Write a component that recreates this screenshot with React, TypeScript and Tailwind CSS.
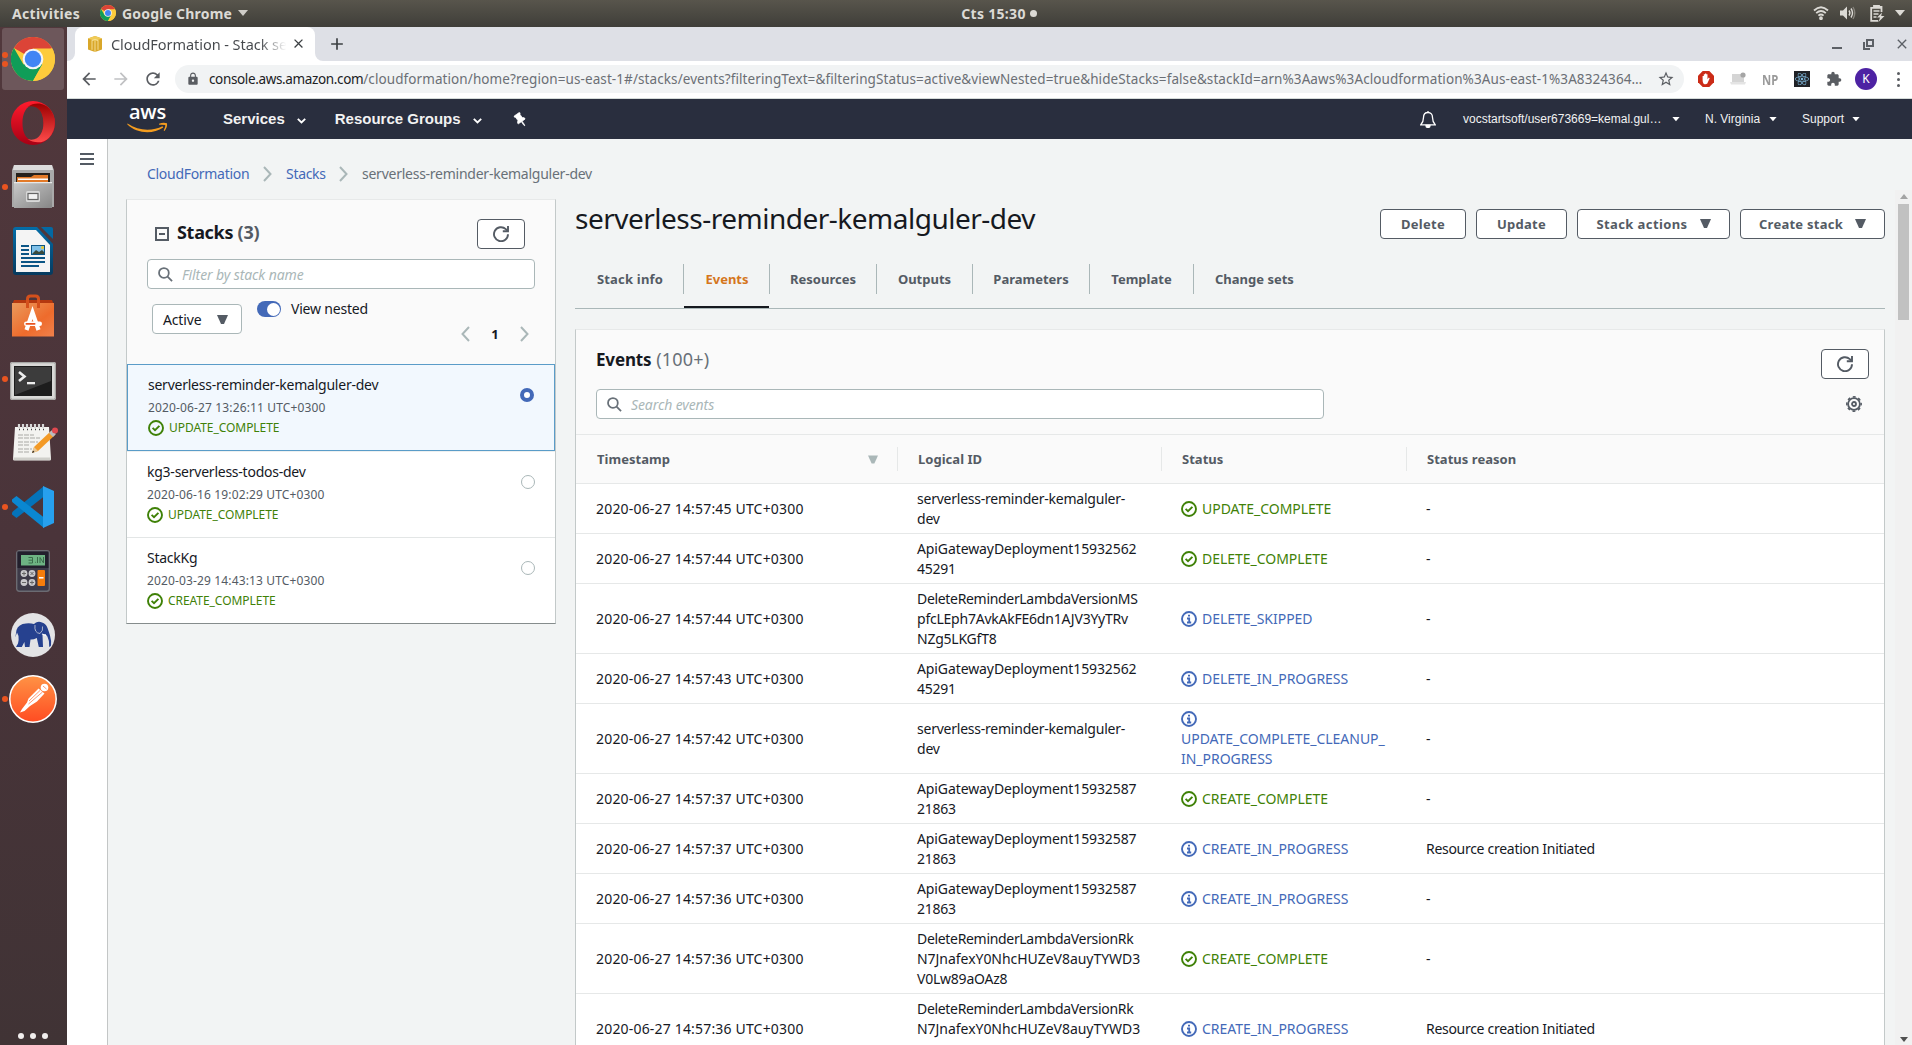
import React from "react";
import { BsPinAngleFill } from "react-icons/bs";
import { MdExtension, MdLock, MdStarBorder, MdRefresh, MdArrowBack, MdArrowForward, MdClose, MdAdd } from "react-icons/md";
import { FaReact } from "react-icons/fa";

/* ---------- shared glyphs ---------- */

const StatusIcon = ({ ok }: { ok: boolean }) =>
  ok ? (
    <svg viewBox="0 0 16 16" className="inline-block h-4 w-4 shrink-0 fill-none stroke-[#3f8107]">
      <circle cx="8" cy="8" r="7" strokeWidth="1.9" />
      <path d="M4.6 7.9 7 10.2 11.4 5.8" strokeWidth="1.9" />
    </svg>
  ) : (
    <svg viewBox="0 0 16 16" className="inline-block h-4 w-4 shrink-0 fill-none stroke-[#4369b8]">
      <circle cx="8" cy="8" r="7" strokeWidth="1.9" />
      <path d="M6 7.5h2.2v3.8M6 11.5h4.2M7 4.6h2" strokeWidth="1.8" />
    </svg>
  );

const RefreshIcon = () => (
  <svg viewBox="0 0 16 16" className="h-4 w-4 fill-none stroke-[#545b64]" strokeWidth="1.9">
    <path d="M15 8.2A7 7 0 1 1 12.8 3.1L15 5.1" />
    <path d="M15 0v5.3H9.8" />
  </svg>
);

const SearchIcon = () => (
  <svg viewBox="0 0 16 16" className="h-[15px] w-[15px] shrink-0 fill-none stroke-[#687078]" strokeWidth="1.9">
    <circle cx="6.3" cy="6.3" r="5.2" />
    <path d="m10.2 10.2 4.8 4.8" />
  </svg>
);

const Triangle = ({ className }: { className: string }) => (
  <svg viewBox="0 0 11 9" className={className}>
    <path d="M0 0h11L7 9H4z" />
  </svg>
);

const Chevron = ({ left = false, className = "" }: { left?: boolean; className?: string }) => (
  <svg viewBox="0 0 9 16" className={"h-4 w-[9px] fill-none stroke-[#aab7b8] " + className} strokeWidth="2">
    <path d={left ? "M8 1 1.5 8 8 15" : "M1 1l6.500 7L1 15"} />
  </svg>
);

const NavCaret = ({ className = "" }: { className?: string }) => (
  <svg viewBox="0 0 8 6" className={"h-[6px] w-2 fill-white " + className}>
    <path d="M.4 1h7.200L4 5.200z" />
  </svg>
);

/* ---------- desktop panel ---------- */

function TopBar() {
  return (
    <div className="relative flex h-[27px] shrink-0 items-center bg-gradient-to-b from-[#58554c] to-[#3f3e39] pb-[1px] font-['Noto_Sans'] text-[14px] font-bold text-[#dcdad5]">
      <span className="ml-3 w-[88px] tracking-[.3px]">Activities</span>
      <ChromeLogo className="h-4 w-4" />
      <span className="ml-[6px] whitespace-nowrap tracking-[.2px]">Google Chrome</span>
      <svg viewBox="0 0 10 6" className="ml-[6px] h-[6px] w-[10px] fill-[#cfcdc8]"><path d="M0 0h10L5 6z" /></svg>
      <div className="absolute inset-x-0 flex items-center justify-center gap-1 pl-[86px] tracking-[.3px]">
        <span>Cts 15:30</span>
        <span className="h-[7px] w-[7px] rounded-full bg-[#dcdad5]" />
      </div>
      <div className="ml-auto flex items-center pr-[7px]">
        <svg viewBox="0 0 16 14" className="h-[14px] w-4 fill-none stroke-[#dcdad5]" strokeWidth="1.8">
          <path d="M1 4.500Q8-2 15 4.500M3.200 7.200Q8 2.800 12.800 7.200M5.400 9.600Q8 7.300 10.600 9.600" />
          <circle cx="8" cy="12.200" r="1" />
        </svg>
        <svg viewBox="0 0 16 14" className="ml-[11px] h-[14px] w-4">
          <path d="M0 4.500h3l4-4v13l-4-4H0z" fill="#dcdad5" />
          <path d="M9 4.500q1.800 2.500 0 5M11 2.500q3 4.500 0 9" fill="none" stroke="#dcdad5" strokeWidth="1.400" />
          <path d="M13 1q3.500 6 0 12" fill="none" stroke="#85827a" strokeWidth="1.400" />
        </svg>
        <svg viewBox="0 0 15 17" className="ml-[14px] h-[17px] w-[15px]">
          <path d="M4 2V1h5v1h2.500v5M1.200 2.800h10.300M1.200 2v13.800h7" fill="none" stroke="#dcdad5" strokeWidth="1.800" />
          <path d="M3.500 6h6M3.500 9h5M3.500 12h3" stroke="#dcdad5" strokeWidth="1.600" />
          <path d="M12 7.500 7 12.500h3L8.500 17l6-6h-3.300z" fill="#dcdad5" />
        </svg>
        <svg viewBox="0 0 10 6" className="ml-[10px] h-[6px] w-[10px] fill-[#dcdad5]"><path d="M0 0h10L5 6z" /></svg>
      </div>
    </div>
  );
}

const ChromeLogo = ({ className }: { className: string }) => (
  <svg viewBox="0 0 48 48" className={className}>
    <circle cx="24" cy="24" r="24" fill="#fdcb3c" />
    <path d="M24 24 3.200 12A24 24 0 0 1 44.800 12z" fill="#dc4437" />
    <path d="M3.200 12A24 24 0 0 0 24 48L34.400 30 24 24 13.600 30z" fill="#109d58" />
    <path d="M24 12.500h21A24 24 0 0 1 24 48l10-18z" fill="#fdcb3c" />
    <circle cx="24" cy="24" r="11.300" fill="#f5f5f5" />
    <circle cx="24" cy="24" r="9" fill="#4285f4" />
  </svg>
);

/* ---------- dock icons ---------- */

const Opera = () => (
  <svg viewBox="0 0 48 48" className="h-11 w-11">
    <defs>
      <linearGradient id="op1" x1="0" y1="0" x2="0" y2="1"><stop stopColor="#ff1b2d" /><stop offset="1" stopColor="#a70014" /></linearGradient>
      <linearGradient id="op2" x1="0" y1="0" x2="0" y2="1"><stop stopColor="#9c0000" /><stop offset="1" stopColor="#ff4b4b" /></linearGradient>
    </defs>
    <path d="M24 0a24 24 0 1 0 0 48 24 24 0 0 0 0-48m0 5c7 0 11.500 8 11.500 19S31 43 24 43 12.500 35 12.500 24 17 5 24 5" fill="url(#op1)" fillRule="evenodd" />
    <path d="M18 6.500C27-.5 38 3 42.500 9a24 24 0 0 1-1 31C36 46 26 47 18 41.500 30 45 35.500 34 35.500 24S30 3 18 6.500" fill="url(#op2)" />
  </svg>
);

const Files = () => (
  <svg viewBox="0 0 42 44" className="h-11 w-[42px]">
    <defs><linearGradient id="fl" x1="0" y1="0" x2="1" y2="1"><stop stopColor="#c9c9c9" /><stop offset="1" stopColor="#868686" /></linearGradient></defs>
    <path d="M2 0h38l2 5v37H0V5z" fill="#a9a9a9" />
    <path d="M2 0h38l1 5H1z" fill="#dcdcdc" />
    <path d="M4 8h34v10H4z" fill="#26211c" />
    <path d="M5 12h14l3-2h14v8H5z" fill="#e37a28" />
    <path d="M6 13.500h30v1.500H6z" fill="#fff" />
    <path d="M2 17h38v26H2z" fill="url(#fl)" />
    <path d="M2 17h38v1.200H2z" fill="#e8e8e8" />
    <rect x="14" y="26" width="14" height="11" rx="1.500" fill="#d8d8d8" />
    <rect x="16" y="28.500" width="10" height="6" fill="#f2f2f2" stroke="#666" strokeWidth="1.200" />
  </svg>
);

const Writer = () => (
  <svg viewBox="0 0 40 48" className="h-12 w-10">
    <defs><linearGradient id="wr" x1="0" y1="0" x2="0" y2="1"><stop stopColor="#036da8" /><stop offset="1" stopColor="#063a5e" /></linearGradient></defs>
    <path d="M3 0h21l16 17v28q0 3-3 3H3q-3 0-3-3V3q0-3 3-3" fill="url(#wr)" />
    <path d="M3 3h20l14 15v27H3z" fill="#f4f4f4" />
    <path d="M28 0h10q2 0 2 2v10z" fill="#0369a3" />
    <path d="M8 18h8v2H8zm0 4h8v2H8zm0 4h8v2H8zm0 4h24v2H8zm0 4h24v2H8zm0 4h18v2H8z" fill="#0b5585" />
    <path d="M18 18h14v10H18z" fill="#0b5585" />
    <path d="M19 19h12v8H19z" fill="#7fc0e8" />
    <path d="m19 27 4-4 3 2 3-2 2 2v2z" fill="#3a4a3c" />
    <circle cx="29.500" cy="20.500" r="1.500" fill="#f0c829" />
  </svg>
);

const Software = () => (
  <svg viewBox="0 0 42 43" className="h-[43px] w-[42px]">
    <defs><linearGradient id="sw" x1="0" y1="0" x2="1" y2="1"><stop stopColor="#ea9a5c" /><stop offset=".6" stopColor="#ee6b2c" /><stop offset="1" stopColor="#f0814c" /></linearGradient></defs>
    <path d="M2 6h38l2 5H0z" fill="#b5380f" />
    <path d="M0 9h42v33.500H0z" fill="url(#sw)" />
    <path d="M15.500 14V5q0-3 3-3h5q3 0 3 3v9" fill="none" stroke="#d4501c" strokeWidth="3" />
    <path d="m14.500 36 6-17.500 6 17.500" fill="none" stroke="#fff" strokeWidth="4.200" />
    <rect x="12" y="27.500" width="18" height="4.500" rx="2.200" fill="#fff" />
    <rect x="13.500" y="29" width="10" height="1.700" rx=".8" fill="#e95420" />
  </svg>
);

const TerminalIcon = () => (
  <svg viewBox="0 0 46 38" className="h-[38px] w-[46px]">
    <rect width="46" height="38" rx="2" fill="#d9d9d7" />
    <rect x=".7" y=".7" width="44.600" height="36.600" rx="1.500" fill="none" stroke="#9a9a98" />
    <rect x="4" y="4" width="38" height="30" fill="#1d1d1d" />
    <path d="M5 5h36v14L5 33z" fill="#3c3c3c" />
    <path d="m9 10 5.500 4.500L9 19" fill="none" stroke="#eee" strokeWidth="2.600" />
    <path d="M17 20h8v2.300h-8z" fill="#eee" />
  </svg>
);

const Gedit = () => (
  <svg viewBox="0 0 46 38" className="h-[38px] w-[46px]">
    <path d="M3 4h34l2 32q0 1.500-1.500 1.500h-35Q1 37.500 1 36z" fill="#f3f3f0" />
    <path d="M1.500 34.500h37V37h-37z" fill="#cfcfca" />
    <path d="M7 1v4m4-4v4m4-4v4m4-4v4m4-4v4m4-4v4m4-4v4" stroke="#d8d8d8" strokeWidth="2.200" />
    <path d="M7 6.500h1m3 0h1m3 0h1m3 0h1m3 0h1m3 0h1m3 0h1" stroke="#444" strokeWidth="1.500" />
    <path d="M6 12h16M6 15h22M6 19h20M6 22h12M6 26h14M6 29h12" stroke="#a9a9a5" strokeWidth="1" strokeDasharray="5 1" />
    <path d="m20 30 2-6L39 8l4 4-17 16z" fill="#f39a26" />
    <path d="m20 30 2-6 4 4z" fill="#e8c89a" />
    <path d="m20 30 1-2.500 1.500 1.500z" fill="#222" />
    <path d="m37 10 3-3 4 4-3 3z" fill="#b9bcc0" />
    <circle cx="43" cy="7.500" r="3" fill="#e0484f" />
  </svg>
);

const VsCode = () => (
  <svg viewBox="0 0 42 42" className="h-[42px] w-[42px]">
    <path d="M0 28.500 4.500 32 32 10.500V0L.8 25.500Q-.5 27 0 28.500" fill="#0473b9" />
    <path d="M0 13.500 4.500 10 32 31.500V42L.8 16.500Q-.5 15 0 13.500" fill="#0a87d1" />
    <path d="M31 0 42 5v32l-11 5z" fill="#27a0ee" />
  </svg>
);

const Calculator = () => (
  <svg viewBox="0 0 34 42" className="h-[42px] w-[34px]">
    <rect x=".7" y=".7" width="32.600" height="40.600" rx="2.500" fill="#3d3a48" stroke="#6b6b72" strokeWidth="1.400" />
    <path d="M1.500 1.500h31V18h-31z" fill="#221f2c" />
    <path d="M5 5h24v10.500H5z" fill="#6db383" />
    <path d="M12.500 7.500h4v5.500h-4m0-2.800h4M19 12.300h.8M21.500 7v6M24 13V7.500l3.500 5.500V7" fill="none" stroke="#3b6b4b" strokeWidth="1" />
    <circle cx="8" cy="23.500" r="3.400" fill="#c9c9cc" /><circle cx="16" cy="23.500" r="3.400" fill="#c9c9cc" />
    <circle cx="8" cy="32.500" r="3.400" fill="#c9c9cc" /><circle cx="16" cy="32.500" r="3.400" fill="#c9c9cc" />
    <path d="M6 23.500h4M8 21.500v4M14.500 22l3 3M17.500 22l-3 3M6 32.500h4M14 32.500h4M16 30.500v4" stroke="#666" strokeWidth="1" />
    <rect x="21.500" y="20" width="7.500" height="16" rx="1" fill="#f57d0b" />
    <path d="M23 27.800h4.500" stroke="#fff" strokeWidth="1.500" />
  </svg>
);

const Elephant = () => (
  <svg viewBox="0 0 44 44" className="h-11 w-11">
    <circle cx="22" cy="22" r="22" fill="#e3e3e5" />
    <path d="M5.500 17Q7.500 11 15 10.500q4-.5 8 .5l2-1.500q3-1.500 6 0 4 1 5.500 5.500 1.500 4 2.500 7.500 1.500 5 1 10l-1.200 1.500-.6-.6q.3-6-1.800-10l-2-2.500q-2 1-2.900 1l.5 12h-4.200l-2-9q-3.500 1.800-6.300 1.500l-1 7.500H14l-.6-5-2.600 5H5l2-3.500q1-4 .5-7.500L6 19.500l-1.700 5z" fill="#26418f" />
    <path d="M24 12q-1 8 5 8.500 3.500-3 2.500-7" fill="none" stroke="#e3e3e5" strokeWidth=".7" />
    <path d="m31 21 4 1.500" stroke="#fff" strokeWidth="1.200" />
  </svg>
);

const Postman = () => (
  <svg viewBox="0 0 48 48" className="h-12 w-12">
    <defs><linearGradient id="pm" x1="0" y1="0" x2="0" y2="1"><stop stopColor="#ff9345" /><stop offset="1" stopColor="#ff4c22" /></linearGradient></defs>
    <circle cx="24" cy="24" r="23.200" fill="url(#pm)" stroke="#fff" strokeWidth="1.500" />
    <circle cx="35.500" cy="12.500" r="3.800" fill="#fff" />
    <path d="m29.500 13.500 6 5-7.500 8-7 4.500-5.500 5-4.500 1.500 2-3.500 5-6.500 1.500-4z" fill="#fff" />
    <path d="m33.500 17-14 12M31 15.500 20 26M34 11l3.500 3" stroke="#ff6c37" strokeWidth=".7" />
  </svg>
);

function DockItem({ children, dots = 0, active = false }: { children: React.ReactNode; dots?: number; active?: boolean }) {
  return (
    <div className="relative flex h-16 shrink-0 items-center justify-center">
      {active && <div className="absolute left-[2px] top-[1px] h-[62px] w-[62px] rounded-[3px] bg-[#6d575b]" />}
      <div className="absolute left-[2px] flex flex-col gap-[3px]">
        {Array.from({ length: dots }, (_, i) => (
          <span key={i} className="h-[6px] w-[6px] rounded-full bg-[#e95420]" />
        ))}
      </div>
      <div className="relative pr-[1px]">{children}</div>
    </div>
  );
}

function Dock() {
  return (
    <aside className="flex w-[67px] shrink-0 flex-col bg-gradient-to-b from-[#51383c] via-[#4a343a] to-[#403335]">
      <DockItem dots={2} active><ChromeLogo className="h-11 w-11" /></DockItem>
      <DockItem><Opera /></DockItem>
      <DockItem dots={1}><Files /></DockItem>
      <DockItem><Writer /></DockItem>
      <DockItem><Software /></DockItem>
      <DockItem dots={1}><div className="pt-1"><TerminalIcon /></div></DockItem>
      <DockItem><div className="pb-[2px] pl-[4px]"><Gedit /></div></DockItem>
      <DockItem dots={1}><VsCode /></DockItem>
      <DockItem><Calculator /></DockItem>
      <DockItem><Elephant /></DockItem>
      <DockItem dots={1}><Postman /></DockItem>
      <div className="mb-[6px] mt-auto flex justify-center gap-[6px] pr-[1px]">
        <span className="h-[6px] w-[6px] rounded-full bg-[#f1eeee]" />
        <span className="h-[6px] w-[6px] rounded-full bg-[#f1eeee]" />
        <span className="h-[6px] w-[6px] rounded-full bg-[#f1eeee]" />
      </div>
    </aside>
  );
}

/* ---------- browser chrome ---------- */

function TabStrip() {
  return (
    <div className="flex h-[34px] shrink-0 bg-[#dee0e6]">
      <div className="h-full w-2 bg-white"><div className="h-full rounded-br-lg bg-[#dee0e6]" /></div>
      <div className="flex w-[240px] items-center rounded-t-lg bg-white pb-[1px] pl-[13px]">
        <svg viewBox="0 0 14 16" className="h-4 w-[14px] shrink-0">
          <path d="M0 2.500 7 0l7 2.500v11L7 16l-7-2.500z" fill="#d9a72a" />
          <path d="M0 2.500 7 0l7 2.500L7 5z" fill="#f0cb57" />
          <path d="M4 4.200v9.600M10 4.200v9.600M7 5v11M4 4.500l3-1 3 1" stroke="#f7e3a1" strokeWidth=".9" fill="none" />
        </svg>
        <span className="ml-[9px] w-[177px] overflow-hidden whitespace-nowrap bg-gradient-to-r from-[#45484c] from-[84%] to-transparent to-[99%] bg-clip-text font-['Noto_Sans'] text-[14.500px] leading-6 tracking-[-.05px] text-transparent">
          CloudFormation - Stack se
        </span>
        <MdClose className="ml-[3px] h-[15px] w-[15px] text-[#3c4043]" />
      </div>
      <div className="h-full w-2 bg-white"><div className="h-full rounded-bl-lg bg-[#dee0e6]" /></div>
      <MdAdd className="ml-1 mt-[7px] h-5 w-5 text-[#3c4043]" />
      <div className="ml-auto flex items-center gap-[20px] pr-[2px]">
        <span className="mr-[1px] mt-2 h-[2px] w-[10px] bg-[#5c6066]" />
        <svg viewBox="0 0 11 11" className="h-[11px] w-[11px] fill-none stroke-[#5c6066]" strokeWidth="2"><path d="M4 1h6v6H4zM1 3v7h6" /></svg>
        <MdClose className="h-4 w-4 text-[#5c6066]" />
      </div>
    </div>
  );
}

function Toolbar() {
  return (
    <div className="flex h-[38px] shrink-0 items-center border-b border-[#d5dbd9] bg-white pb-[1px] font-['Noto_Sans']">
      <MdArrowBack className="ml-3 h-5 w-5 text-[#5a5d62]" />
      <MdArrowForward className="ml-3 h-5 w-5 text-[#c0c1c3]" />
      <MdRefresh className="ml-3 h-5 w-5 text-[#5a5d62]" />
      <div className="ml-3 flex h-7 w-[1509px] items-center rounded-full bg-[#f1f3f4] pl-[11px] pr-[9px]">
        <MdLock className="h-[14px] w-[14px] shrink-0 text-[#5a5d62]" />
        <div className="ml-[9px] flex whitespace-nowrap text-[13.500px] leading-5 text-[#6b6f75]">
          <span className="tracking-[-.36px] text-[#202124]">console.aws.amazon.com</span>
          <span className="tracking-[.09px]">/cloudformation/home?region=us-east-1#/stacks/events?filteringText=&amp;filteringStatus=active&amp;viewNested=true&amp;hideStacks=false&amp;stackId=arn%3Aaws%3Acloudformation%3Aus-east-1%3A8324364…</span>
        </div>
        <MdStarBorder className="ml-auto h-[18px] w-[18px] text-[#5a5d62]" />
      </div>
      <div className="ml-[14px] flex items-center">
        <svg viewBox="0 0 16 16" className="h-4 w-4">
          <path d="M4.700 0h6.600L16 4.700v6.600L11.300 16H4.700L0 11.300V4.700z" fill="#cb2b17" />
          <path d="M4.600 9V5h1.200v2.500V3.300h1.200V7 2.600h1.300V7 3.300h1.200v4.900l1.300-1.700.9.700-2.400 5.300q-1 1-2.500.8Q4.700 13 4.600 9" fill="#fff" />
        </svg>
        <svg viewBox="0 0 16 14" className="ml-4 h-[14px] w-4">
          <path d="M2 2h12v8H2z" fill="#d5d5d5" /><path d="M0 10h16l-1 2.500H1z" fill="#e4e4e4" /><circle cx="13" cy="3" r="2.600" fill="#a5a5a5" />
        </svg>
        <span className="ml-4 w-4 origin-left scale-x-[.78] text-[14.500px] font-bold leading-4 text-[#9a9a9a]">NP</span>
        <span className="ml-4 flex h-4 w-4 items-center justify-center bg-[#202226]"><FaReact className="h-[14px] w-[14px] text-[#7fb8dc]" /></span>
        <MdExtension className="ml-4 h-4 w-4 text-[#5a5d62]" />
        <span className="ml-[13px] flex h-[22px] w-[22px] items-center justify-center rounded-full bg-[#4d22a3] text-[12px] text-white">K</span>
        <span className="ml-5 flex flex-col gap-[3px]">
          <span className="h-[3px] w-[3px] rounded-full bg-[#5a5d62]" />
          <span className="h-[3px] w-[3px] rounded-full bg-[#5a5d62]" />
          <span className="h-[3px] w-[3px] rounded-full bg-[#5a5d62]" />
        </span>
      </div>
    </div>
  );
}

/* ---------- AWS console ---------- */

function AwsNav() {
  return (
    <nav className="flex h-10 shrink-0 items-center bg-[#292e3e] font-['Liberation_Sans'] text-[12px] text-[#f2f2f2]">
      <div className="ml-[60px] flex h-full w-[41px] flex-col items-center">
        <span className="h-[23px] font-['Open_Sans'] text-[20px] font-semibold leading-[26px] tracking-[-.2px] text-white">aws</span>
        <svg viewBox="0 0 41 11" className="h-[11px] w-[41px] shrink-0">
          <path d="M.5 1.500C12 9.500 26 9 35.500 4.200l.8 1.300C26 12.500 10 12 .2 2.300z" fill="#f39c1f" />
          <path d="M32 1.700Q36 .2 40 1.200 40.700 5 37.500 9l-.8-.4q1.900-3.800 1.600-5.600-3-.3-6.200-.2z" fill="#f39c1f" />
        </svg>
      </div>
      <span className="ml-[55px] text-[15px] font-bold">Services</span>
      <svg viewBox="0 0 9 6" className="ml-[12px] mt-[3px] h-[6px] w-[9px] fill-none stroke-white" strokeWidth="1.800"><path d="m.8.8 3.700 3.700L8.200.8" /></svg>
      <span className="ml-[29px] text-[15px] font-bold">Resource Groups</span>
      <svg viewBox="0 0 9 6" className="ml-[12px] mt-[3px] h-[6px] w-[9px] fill-none stroke-white" strokeWidth="1.800"><path d="m.8.8 3.700 3.700L8.200.8" /></svg>
      <BsPinAngleFill className="ml-[31px] h-[14px] w-[14px] rotate-[10deg] -scale-x-100 stroke-white stroke-[.8px] text-white" />
      <div className="ml-auto flex items-center">
        <svg viewBox="0 0 16 17" className="mr-[27px] h-[17px] w-4 fill-none stroke-white" strokeWidth="1.300">
          <path d="M8 1.500c-3 0-4.500 2.200-4.500 5 0 4-1 5.500-2.700 7.300h14.400c-1.700-1.800-2.700-3.300-2.700-7.300 0-2.800-1.500-5-4.500-5M8 0v2" />
          <path d="M6 14.500q0 2 2 2t2-2z" className="fill-white" />
        </svg>
        <span className="w-[209px]">vocstartsoft/user673669=kemal.gul…</span>
        <NavCaret />
        <span className="ml-[25px] w-[64px]">N. Virginia</span>
        <NavCaret />
        <span className="ml-[25px] w-[50px]">Support</span>
        <NavCaret className="mr-[52px]" />
      </div>
    </nav>
  );
}

const stacks = [
  { name: "serverless-reminder-kemalguler-dev", date: "2020-06-27 13:26:11 UTC+0300", status: "UPDATE_COMPLETE" },
  { name: "kg3-serverless-todos-dev", date: "2020-06-16 19:02:29 UTC+0300", status: "UPDATE_COMPLETE" },
  { name: "StackKg", date: "2020-03-29 14:43:13 UTC+0300", status: "CREATE_COMPLETE" },
];

function StackItem({ index }: { index: number }) {
  const s = stacks[index];
  const selected = index === 0;
  return (
    <div
      className={
        selected
          ? "flex h-[87px] justify-between border border-[#5a9cc8] bg-[#f2f8fe] pl-5 pr-[20px] pt-[10px]"
          : index === 1
            ? "flex h-[87px] justify-between border-b border-t border-b-[#e3e6e6] border-t-[#eef0f0] bg-white pl-5 pr-5 pt-[10px]"
            : "flex h-[85px] justify-between bg-white pl-5 pr-5 pt-[10px]"
      }
    >
      <div>
        <div className="text-[14px] leading-5 tracking-[-.24px] text-[#16191f]">{s.name}</div>
        <div className="mt-[3px] text-[12px] leading-5 tracking-[.14px] text-[#545b64]">{s.date}</div>
        <div className="flex items-center text-[12px] leading-5 tracking-[-.05px] text-[#3f8107]">
          <StatusIcon ok />
          <span className="ml-[5px]">{s.status}</span>
        </div>
      </div>
      {selected ? (
        <span className="mt-[13px] h-[14px] w-[14px] rounded-full border-4 border-[#4369b8] bg-white" />
      ) : (
        <span className="mt-[13px] h-[14px] w-[14px] rounded-full border border-[#aab7b8] bg-white" />
      )}
    </div>
  );
}

function StacksPanel() {
  return (
    <section className="h-[425px] w-[430px] shrink-0 border border-[#c3c9c9] border-b-[#858c8c] border-t-[#e7e9e9] bg-[#fafafa]">
      <div className="h-[164px] pl-5 pr-5 pt-[19px]">
        <div className="flex h-[30px]">
          <svg viewBox="0 0 14 14" className="ml-2 mt-2 h-[14px] w-[14px] fill-none stroke-[#545b64]" strokeWidth="2"><path d="M1 1h12v12H1zM4 7h6" /></svg>
          <h2 className="-mt-[1px] ml-2 text-[18px] font-bold leading-7 tracking-[-.3px] text-[#16191f]">Stacks <span className="text-[#545b64]">(3)</span></h2>
          <button className="ml-auto mr-[10px] flex h-[30px] w-12 items-center justify-center rounded-sm border border-[#545b64] bg-white"><RefreshIcon /></button>
        </div>
        <div className="mt-[10px] flex h-[30px] w-[388px] items-center rounded-sm border border-[#aab7b8] bg-white pl-[10px]">
          <SearchIcon />
          <span className="ml-[9px] text-[14px] italic tracking-[-.1px] text-[#aab7b8]">Filter by stack name</span>
        </div>
        <div className="mt-3 flex">
          <div className="ml-[5px] mt-[3px] flex h-[30px] w-[90px] items-center justify-between rounded-sm border border-[#aab7b8] bg-white pl-[10px] pr-[13px] text-[14px] tracking-[-.15px] text-[#16191f]">
            Active
            <Triangle className="h-[9px] w-[11px] fill-[#545b64]" />
          </div>
          <div className="ml-[15px] flex h-4 w-6 items-center justify-end rounded-full bg-[#4369b8] pr-[1px]"><span className="h-[13px] w-[13px] rounded-full bg-white" /></div>
          <span className="ml-[10px] mt-[-2px] text-[14px] leading-5 tracking-[-.2px] text-[#16191f]">View nested</span>
          <div className="ml-auto mr-[6px] mt-[25px] flex items-center">
            <Chevron left />
            <span className="w-[50px] text-center text-[13px] font-bold leading-4 text-[#16191f]">1</span>
            <Chevron />
          </div>
        </div>
      </div>
      <StackItem index={0} />
      <StackItem index={1} />
      <StackItem index={2} />
    </section>
  );
}

const events: [string, string[], string[], string][] = [
  ["14:57:45", ["serverless-reminder-kemalguler-", "dev"], ["UPDATE_COMPLETE"], "-"],
  ["14:57:44", ["ApiGatewayDeployment15932562", "45291"], ["DELETE_COMPLETE"], "-"],
  ["14:57:44", ["DeleteReminderLambdaVersionMS", "pfcLEph7AvkAkFE6dn1AJV3YyTRv", "NZg5LKGfT8"], ["DELETE_SKIPPED"], "-"],
  ["14:57:43", ["ApiGatewayDeployment15932562", "45291"], ["DELETE_IN_PROGRESS"], "-"],
  ["14:57:42", ["serverless-reminder-kemalguler-", "dev"], ["UPDATE_COMPLETE_CLEANUP_", "IN_PROGRESS"], "-"],
  ["14:57:37", ["ApiGatewayDeployment15932587", "21863"], ["CREATE_COMPLETE"], "-"],
  ["14:57:37", ["ApiGatewayDeployment15932587", "21863"], ["CREATE_IN_PROGRESS"], "Resource creation Initiated"],
  ["14:57:36", ["ApiGatewayDeployment15932587", "21863"], ["CREATE_IN_PROGRESS"], "-"],
  ["14:57:36", ["DeleteReminderLambdaVersionRk", "N7JnafexY0NhcHUZeV8auyTYWD3", "V0Lw89aOAz8"], ["CREATE_COMPLETE"], "-"],
  ["14:57:36", ["DeleteReminderLambdaVersionRk", "N7JnafexY0NhcHUZeV8auyTYWD3", ""], ["CREATE_IN_PROGRESS"], "Resource creation Initiated"],
];

const idTracking = (line: string) =>
  line.startsWith("Delete")
    ? "h-5 tracking-[-.32px]"
    : line.startsWith("N7J")
      ? "h-5 tracking-[-.04px]"
      : line.startsWith("Api")
        ? "h-5 tracking-[-.1px]"
        : "h-5 tracking-[-.23px]";

function EventRow({ row }: { row: (typeof events)[number] }) {
  const [time, id, status, reason] = row;
  const ok = status[0].endsWith("COMPLETE");
  return (
    <div className="grid grid-cols-[321px_264px_245px_1fr] items-center border-b border-[#e6e8e8] bg-white pb-1 pl-5 pt-[5px] text-[14px] leading-5 text-[#16191f]">
      <div className="tracking-[.18px]">2020-06-27 {time} UTC+0300</div>
      <div>{id.map((l) => <div key={l} className={idTracking(l)}>{l}</div>)}</div>
      <div className={"tracking-[-.03px] " + (ok ? "text-[#3f8107]" : "text-[#4369b8]")}>
        {status.length === 1 ? (
          <div className="flex items-center"><StatusIcon ok={ok} /><span className="ml-[5px]">{status[0]}</span></div>
        ) : (
          <>
            <div className="flex h-5 items-center"><StatusIcon ok={ok} /></div>
            {status.map((l) => <div key={l}>{l}</div>)}
          </>
        )}
      </div>
      <div className="tracking-[-.29px]">{reason}</div>
    </div>
  );
}

function HeadCell({ label, sort = false, last = false }: { label: string; sort?: boolean; last?: boolean }) {
  return (
    <div className={"flex h-6 items-center" + (last ? "" : " border-r border-[#e6e8e8]")}>
      <span className="pt-[1px]">{label}</span>
      {sort && <Triangle className="ml-auto mr-[19px] h-[9px] w-[10px] fill-[#aab7b8]" />}
    </div>
  );
}

function EventsPanel() {
  return (
    <section className="mt-5 min-h-0 w-[1310px] flex-1 overflow-hidden border border-b-0 border-[#c3c9c9] border-t-[#e7e9e9] bg-[#fafafa]">
      <div className="flex h-[104px] justify-between pl-5 pr-[15px]">
        <div>
          <h2 className="mt-[15px] text-[18px] leading-7 text-[#16191f]">
            <span className="text-[17px] font-bold tracking-[-.15px]">Events</span>{" "}
            <span className="tracking-[.2px] text-[#687078]">(100+)</span>
          </h2>
          <div className="mt-[15px] flex h-[30px] w-[728px] items-center rounded-sm border border-[#aab7b8] bg-white pl-[10px]">
            <SearchIcon />
            <span className="ml-[9px] text-[14px] italic tracking-[-.1px] text-[#aab7b8]">Search events</span>
          </div>
        </div>
        <div className="flex flex-col items-end">
          <button className="mt-[19px] flex h-[30px] w-12 items-center justify-center rounded-sm border border-[#545b64] bg-white"><RefreshIcon /></button>
          <svg viewBox="0 0 16 16" className="mr-[7px] mt-[17px] h-4 w-4 fill-none stroke-[#545b64]">
            <circle cx="8" cy="8" r="5.900" strokeWidth="1.800" />
            <circle cx="8" cy="8" r="7.200" strokeWidth="1.500" strokeDasharray="2.900 2.755" strokeDashoffset="1.450" />
            <circle cx="8" cy="8" r="2" strokeWidth="1.800" />
          </svg>
        </div>
      </div>
      <div className="grid h-[50px] grid-cols-[301px_264px_245px_1fr] items-center border-y border-[#e6e8e8] pl-[21px] text-[13px] font-bold tracking-[.03px] text-[#545b64]">
        <HeadCell label="Timestamp" sort />
        <div className="pl-5"><HeadCell label="Logical ID" /></div>
        <div className="pl-5"><HeadCell label="Status" /></div>
        <div className="pl-5"><HeadCell label="Status reason" last /></div>
      </div>
      {events.map((row, i) => <EventRow key={i} row={row} />)}
    </section>
  );
}

function Tabs() {
  const cell = "flex h-[30px] items-center justify-center border-r border-[#aab7b8] pt-[1px]";
  return (
    <div className="mt-[27px] flex h-[45px] w-[1310px] border-b border-[#aab7b8] text-[13px] font-bold text-[#545b64]">
      <div className={cell + " w-[109px] pl-[2px] tracking-[.2px]"}>Stack info</div>
      <div className="relative w-[86px] text-[#d5761c]">
        <div className={cell + " pl-[1px]"}>Events</div>
        <div className="absolute bottom-0 left-0 h-[2px] w-[85px] bg-[#16191f]" />
      </div>
      <div className={cell + " w-[107px]"}>Resources</div>
      <div className={cell + " w-[96px]"}>Outputs</div>
      <div className={cell + " w-[117px]"}>Parameters</div>
      <div className={cell + " w-[104px]"}>Template</div>
      <div className="flex h-[30px] items-center pl-[21px] pt-[1px]">Change sets</div>
    </div>
  );
}

function Main() {
  const btn = "flex h-[30px] items-center rounded-sm border border-[#545b64] bg-white tracking-[.25px] justify-center";
  return (
    <main className="ml-[19px] flex w-[1310px] shrink-0 flex-col">
      <div className="flex h-[38px] items-start justify-between">
        <h1 className="mt-[1px] text-[28px] leading-9 tracking-[-.5px] text-[#16191f]">serverless-reminder-kemalguler-dev</h1>
        <div className="mt-[10px] flex gap-[10px] text-[13px] font-bold text-[#545b64]">
          <button className={btn + " w-[86px] pt-[1px]"}>Delete</button>
          <button className={btn + " w-[91px] pt-[1px]"}>Update</button>
          <button className={btn + " w-[153px] gap-3"}><span className="pt-[1px] tracking-[.4px]">Stack actions</span><Triangle className="mb-[1px] h-[9px] w-[11px] fill-[#545b64]" /></button>
          <button className={btn + " w-[145px] gap-3"}><span className="pt-[1px]">Create stack</span><Triangle className="mb-[1px] h-[9px] w-[11px] fill-[#545b64]" /></button>
        </div>
      </div>
      <Tabs />
      <EventsPanel />
    </main>
  );
}

function Scrollbar() {
  return (
    <div className="-mt-[9px] ml-[10px] flex w-[17px] shrink-0 flex-col items-center bg-[#f1f1f1]">
      <svg viewBox="0 0 8 5" className="mt-[4px] h-[5px] w-2 fill-[#a3a3a3]"><path d="M0 5h8L4 0z" /></svg>
      <div className="mt-[5px] h-[116px] w-[11px] bg-[#c1c1c1]" />
      <svg viewBox="0 0 8 5" className="mb-[3px] mt-auto h-[5px] w-2 fill-[#505050]"><path d="M0 0h8L4 5z" /></svg>
    </div>
  );
}

function Console() {
  return (
    <div className="flex min-h-0 flex-1 bg-[#f2f4f4] font-['Noto_Sans']">
      <div className="w-[41px] shrink-0 border-r border-[#c3c6c6] bg-white">
        <div className="ml-[13px] mt-[14px] flex w-[14px] flex-col gap-[3px]">
          <span className="h-[2px] bg-[#545b64]" />
          <span className="h-[2px] bg-[#545b64]" />
          <span className="h-[2px] bg-[#545b64]" />
        </div>
      </div>
      <div className="flex min-w-0 flex-1 flex-col">
        <div className="flex h-[60px] shrink-0 items-center pl-[39px] pt-[9px] text-[14px] tracking-[-.3px] text-[#4369b8]">
          <span className="w-[116px]">CloudFormation</span>
          <Chevron />
          <span className="ml-[14px] w-[53px]">Stacks</span>
          <Chevron />
          <span className="ml-[14px] tracking-[-.25px] text-[#687078]">serverless-reminder-kemalguler-dev</span>
        </div>
        <div className="flex min-h-0 flex-1 pl-[18px]">
          <StacksPanel />
          <Main />
          <Scrollbar />
        </div>
      </div>
    </div>
  );
}

export default function App() {
  return (
    <div className="flex h-[1045px] w-[1912px] flex-col overflow-hidden">
      <TopBar />
      <div className="flex min-h-0 flex-1">
        <Dock />
        <div className="flex min-w-0 flex-1 flex-col">
          <TabStrip />
          <Toolbar />
          <AwsNav />
          <Console />
        </div>
      </div>
    </div>
  );
}
